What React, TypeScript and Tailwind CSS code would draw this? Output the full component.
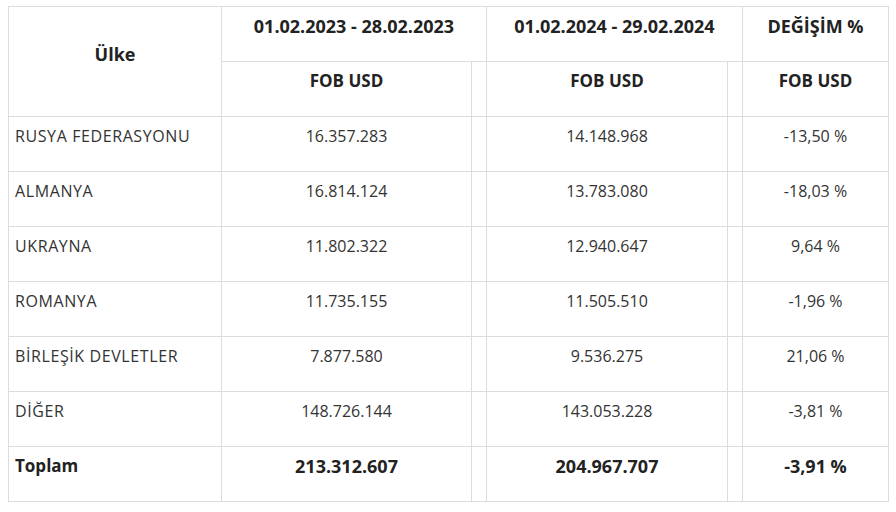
const rows = [
  { country: "RUSYA FEDERASYONU", y2023: "16.357.283", y2024: "14.148.968", change: "-13,50 %" },
  { country: "ALMANYA", y2023: "16.814.124", y2024: "13.783.080", change: "-18,03 %" },
  { country: "UKRAYNA", y2023: "11.802.322", y2024: "12.940.647", change: "9,64 %" },
  { country: "ROMANYA", y2023: "11.735.155", y2024: "11.505.510", change: "-1,96 %" },
  { country: "BİRLEŞİK DEVLETLER", y2023: "7.877.580", y2024: "9.536.275", change: "21,06 %" },
  { country: "DİĞER", y2023: "148.726.144", y2024: "143.053.228", change: "-3,81 %" },
];

const cell = "border border-[#dddddd] px-[6px] pt-[7px] pb-[23px] align-middle leading-6";

function App() {
  return (
    <div className="bg-white min-h-screen pt-[6px] pl-[8px] text-[#333333]" style={{ fontFamily: '"Open Sans", sans-serif' }}>
      <table className="table-fixed border-collapse text-[16px]">
        <colgroup>
          <col className="w-[213px]" />
          <col className="w-[250px]" />
          <col className="w-[15px]" />
          <col className="w-[241px]" />
          <col className="w-[15px]" />
          <col className="w-[146px]" />
        </colgroup>
        <thead className="text-[18px] font-bold text-[#222222]">
          <tr className="h-[55px]">
            <th rowSpan={2} className={cell}>Ülke</th>
            <th colSpan={2} className={cell}>01.02.2023 - 28.02.2023</th>
            <th colSpan={2} className={cell}>01.02.2024 - 29.02.2024</th>
            <th className={cell}>DEĞİŞİM %</th>
          </tr>
          <tr className="h-[55px] text-[17px]">
            <th className={cell}>FOB USD</th>
            <th className={cell}></th>
            <th className={cell}>FOB USD</th>
            <th className={cell}></th>
            <th className={cell}>FOB USD</th>
          </tr>
        </thead>
        <tbody>
          {rows.map((r) => (
            <tr key={r.country} className="h-[55px]">
              <td className={`${cell} text-left tracking-[0.6px]`}>{r.country}</td>
              <td className={`${cell} text-center`}>{r.y2023}</td>
              <td className={cell}></td>
              <td className={`${cell} text-center`}>{r.y2024}</td>
              <td className={cell}></td>
              <td className={`${cell} text-center`}>{r.change}</td>
            </tr>
          ))}
          <tr className="h-[55px] font-bold text-[18px] text-[#222222]">
            <td className={`${cell} text-left text-[17px]`}>Toplam</td>
            <td className={`${cell} text-center`}>213.312.607</td>
            <td className={cell}></td>
            <td className={`${cell} text-center`}>204.967.707</td>
            <td className={cell}></td>
            <td className={`${cell} text-center`}>-3,91 %</td>
          </tr>
        </tbody>
      </table>
    </div>
  );
}

export default App;
